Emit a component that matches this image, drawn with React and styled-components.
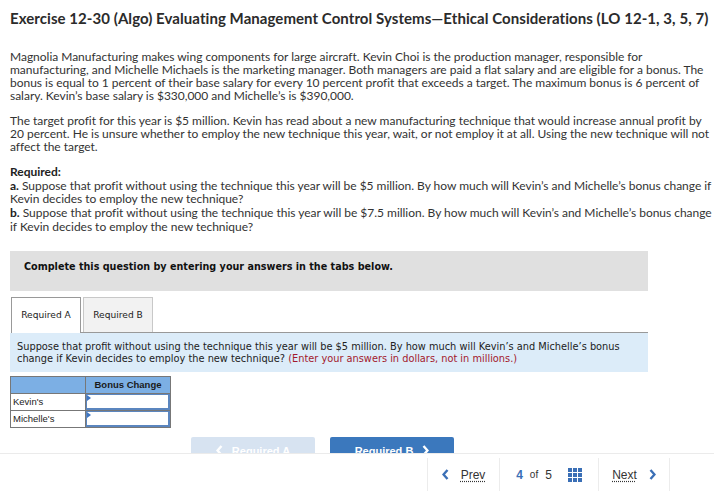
import React from 'react';
import styled, { createGlobalStyle } from 'styled-components';

const GlobalStyle = createGlobalStyle`
    html, body {
        margin: 0;
        padding: 0;
        background: #ffffff;
        overflow: hidden;
    }
`;

let Page = styled.div`
    height: 100vh;
    display: flex;
    flex-direction: column;
`;

let Content = styled.div`
    flex: 1;
    overflow: hidden;
    padding: 10px 3px 0 10px;
`;

let Title = styled.h1`
    margin: 0 0 23px 0;
    font-family: Lato, 'Liberation Sans', sans-serif;
    font-weight: 700;
    font-size: 15px;
    letter-spacing: 0.06px;
    line-height: 17px;
    color: #2b2b2b;
    white-space: nowrap;
`;

// lines are broken as in the source text
let Para = styled.p`
    margin: 0 0 ${(p) => (p.$last ? 0 : 12)}px 0;
    font-family: Lato, 'Liberation Sans', sans-serif;
    font-size: 12px;
    letter-spacing: -0.02px;
    line-height: ${(p) => (p.$loose ? '13.7px' : '13px')};
    color: #333333;
    white-space: nowrap;
`;

let Strong = styled.span`
    font-weight: 700;
    color: #222222;
`;

// grey box + tabs + answer area
let QuestionBox = styled.div`
    width: 638px;
    margin-top: 17px;
    font-family: 'DejaVu Sans', Verdana, sans-serif;
`;

let Banner = styled.div`
    height: 40px;
    box-sizing: border-box;
    padding: 10px 14px 0 14px;
    background-color: #e0e0e0;
    font-weight: 700;
    font-size: 9.65px;
    color: #111;
`;

let TabRow = styled.div`
    display: flex;
    gap: 2px;
    margin-top: 6px;
    margin-left: 1px;
    border-bottom: 1px solid #999999;
`;

let Tab = styled.div`
    width: 70px;
    box-sizing: border-box;
    display: flex;
    align-items: center;
    justify-content: center;
    font-size: 9.1px;
    color: #222;
    background-color: ${(p) => (p.$active ? '#ffffff' : '#f2f2f2')};
    border: 1px solid ${(p) => (p.$active ? '#999999' : '#c8c8c8')};
    border-bottom: none;
    margin-bottom: ${(p) => (p.$active ? '-1px' : '0')};
    height: ${(p) => (p.$active ? '36px' : '35px')};
`;

let Prompt = styled.div`
    background-color: #dcecf9;
    padding: 8px 7px 7px 7px;
    height: 39px;
    box-sizing: border-box;
    font-size: 9.8px;
    line-height: 12px;
    color: #222;
`;

let Note = styled.span`
    color: #a3192c;
`;

let Table = styled.table`
    margin-top: 4px;
    border-collapse: collapse;
    font-family: 'Liberation Sans', Arial, sans-serif;
    font-size: 9.5px;
`;

let Head = styled.th`
    background-color: #7cafe4;
    border: 1px solid #777777;
    height: 16px;
    padding: 0;
    width: ${(p) => p.$w}px;
    font-weight: 700;
    font-size: 9.5px;
    color: #1a1a1a;
`;

let Label = styled.td`
    border: 1px solid #777777;
    height: 16px;
    padding: 0 0 0 2px;
    color: #222;
`;

let InputCell = styled.td`
    border: 1px solid #777777;
    padding: 0;
    position: relative;
`;

let Field = styled.div`
    height: 16px;
    margin: 0;
    box-sizing: border-box;
    border: 1px solid #5b86bf;
    border-width: 1px 2px 2px 1px;
    background: #ffffff;
`;

let Marker = styled.span`
    position: absolute;
    left: 1px;
    top: 1px;
    width: 0;
    height: 0;
    border-top: 3px solid transparent;
    border-bottom: 3px solid transparent;
    border-left: 4px solid #3f76c2;
`;

let NavRow = styled.div`
    display: flex;
    justify-content: center;
    gap: 15px;
    padding-right: 13px;
    margin-top: 9px;
`;

let NavButton = styled.div`
    width: 124px;
    height: 30px;
    display: flex;
    justify-content: center;
    gap: 9px;
    padding-top: 8px;
    box-sizing: border-box;
    font-family: 'Liberation Sans', Arial, sans-serif;
    font-weight: 700;
    font-size: 11px;
    color: #ffffff;
    background-color: ${(p) => (p.$primary ? '#3b78bd' : '#d7e3f1')};
    border-radius: 2px 2px 0 0;
`;

let Footer = styled.div`
    height: 37px;
    flex-shrink: 0;
    border-top: 1px solid #ebebeb;
    display: flex;
    justify-content: flex-end;
    padding-right: 44px;
    font-family: 'Liberation Sans', Arial, sans-serif;
    color: #333;
`;

let FootCell = styled.div`
    width: ${(p) => p.$w}px;
    box-sizing: border-box;
    margin-top: 4px;
    border-left: 1px solid #ececec;
    border-right: ${(p) => (p.$last ? '1px solid #ececec' : 'none')};
    display: flex;
    align-items: center;
    justify-content: center;
    gap: ${(p) => p.$gap ?? 12}px;
`;

let FootLink = styled.span`
    font-size: 12px;
    text-decoration: underline dotted #333;
    text-underline-offset: 2px;
`;

let PageNum = styled.span`
    font-size: 12px;
    font-weight: ${(p) => (p.$bold ? 700 : 400)};
    color: ${(p) => (p.$bold ? '#3a6fb6' : '#333')};
    margin-right: ${(p) => p.$mr || 0}px;
`;

let Small = styled.span`
    font-size: 10px;
    margin-right: 7px;
`;

const Chevron = ({ dir, color = '#3a6fb6', w = 7, h = 11, sw = 2.4 }) => (
    <svg width={w} height={h} viewBox="0 0 7 11">
        <polyline
            points={dir === 'left' ? '5.5,1 1.5,5.5 5.5,10' : '1.5,1 5.5,5.5 1.5,10'}
            fill="none"
            stroke={color}
            strokeWidth={sw}
        />
    </svg>
);

const GridIcon = () => (
    <svg width="14" height="14" viewBox="0 0 14 14">
        {[0, 1, 2].map((r) =>
            [0, 1, 2].map((c) => (
                <rect key={r + '-' + c} x={c * 5} y={r * 5} width="4" height="4" fill="#3a6fb6" />
            ))
        )}
    </svg>
);

const App = () => {
    return (
        <Page>
            <GlobalStyle />
            <Content>
                <Title>
                    Exercise 12-30 (Algo) Evaluating Management Control Systems—Ethical Considerations (LO 12-1, 3, 5, 7)
                </Title>
                <Para>
                    Magnolia Manufacturing makes wing components for large aircraft. Kevin Choi is the production manager, responsible for
                    <br />
                    manufacturing, and Michelle Michaels is the marketing manager. Both managers are paid a flat salary and are eligible for a bonus. The
                    <br />
                    bonus is equal to 1 percent of their base salary for every 10 percent profit that exceeds a target. The maximum bonus is 6 percent of
                    <br />
                    salary. Kevin’s base salary is $330,000 and Michelle’s is $390,000.
                </Para>
                <Para>
                    The target profit for this year is $5 million. Kevin has read about a new manufacturing technique that would increase annual profit by
                    <br />
                    20 percent. He is unsure whether to employ the new technique this year, wait, or not employ it at all. Using the new technique will not
                    <br />
                    affect the target.
                </Para>
                <Para $last $loose>
                    <Strong>Required:</Strong>
                    <br />
                    <Strong>a.</Strong> Suppose that profit without using the technique this year will be $5 million. By how much will Kevin’s and Michelle’s bonus change if
                    <br />
                    Kevin decides to employ the new technique?
                    <br />
                    <Strong>b.</Strong> Suppose that profit without using the technique this year will be $7.5 million. By how much will Kevin’s and Michelle’s bonus change
                    <br />
                    if Kevin decides to employ the new technique?
                </Para>

                <QuestionBox>
                    <Banner>Complete this question by entering your answers in the tabs below.</Banner>
                    <TabRow>
                        <Tab $active>Required A</Tab>
                        <Tab>Required B</Tab>
                    </TabRow>
                    <Prompt>
                        Suppose that profit without using the technique this year will be $5 million. By how much will Kevin’s and Michelle’s bonus
                        change if Kevin decides to employ the new technique? <Note>(Enter your answers in dollars, not in millions.)</Note>
                    </Prompt>
                    <Table>
                        <thead>
                            <tr>
                                <Head $w={74}></Head>
                                <Head $w={84}>Bonus Change</Head>
                            </tr>
                        </thead>
                        <tbody>
                            <tr>
                                <Label>Kevin's</Label>
                                <InputCell>
                                    <Marker />
                                    <Field />
                                </InputCell>
                            </tr>
                            <tr>
                                <Label>Michelle's</Label>
                                <InputCell>
                                    <Marker />
                                    <Field />
                                </InputCell>
                            </tr>
                        </tbody>
                    </Table>
                    <NavRow>
                        <NavButton>
                            <Chevron dir="left" color="#ffffff" />
                            Required A
                        </NavButton>
                        <NavButton $primary>
                            Required B
                            <Chevron dir="right" color="#ffffff" />
                        </NavButton>
                    </NavRow>
                </QuestionBox>
            </Content>
            <Footer>
                <FootCell $w={72} $gap={12}>
                    <Chevron dir="left" />
                    <FootLink>Prev</FootLink>
                </FootCell>
                <FootCell $w={99} $gap={0}>
                    <PageNum $bold $mr={7}>4</PageNum>
                    <Small>of</Small>
                    <PageNum $mr={16}>5</PageNum>
                    <GridIcon />
                </FootCell>
                <FootCell $w={72} $gap={12} $last>
                    <FootLink>Next</FootLink>
                    <Chevron dir="right" />
                </FootCell>
            </Footer>
        </Page>
    );
};

export default App;
